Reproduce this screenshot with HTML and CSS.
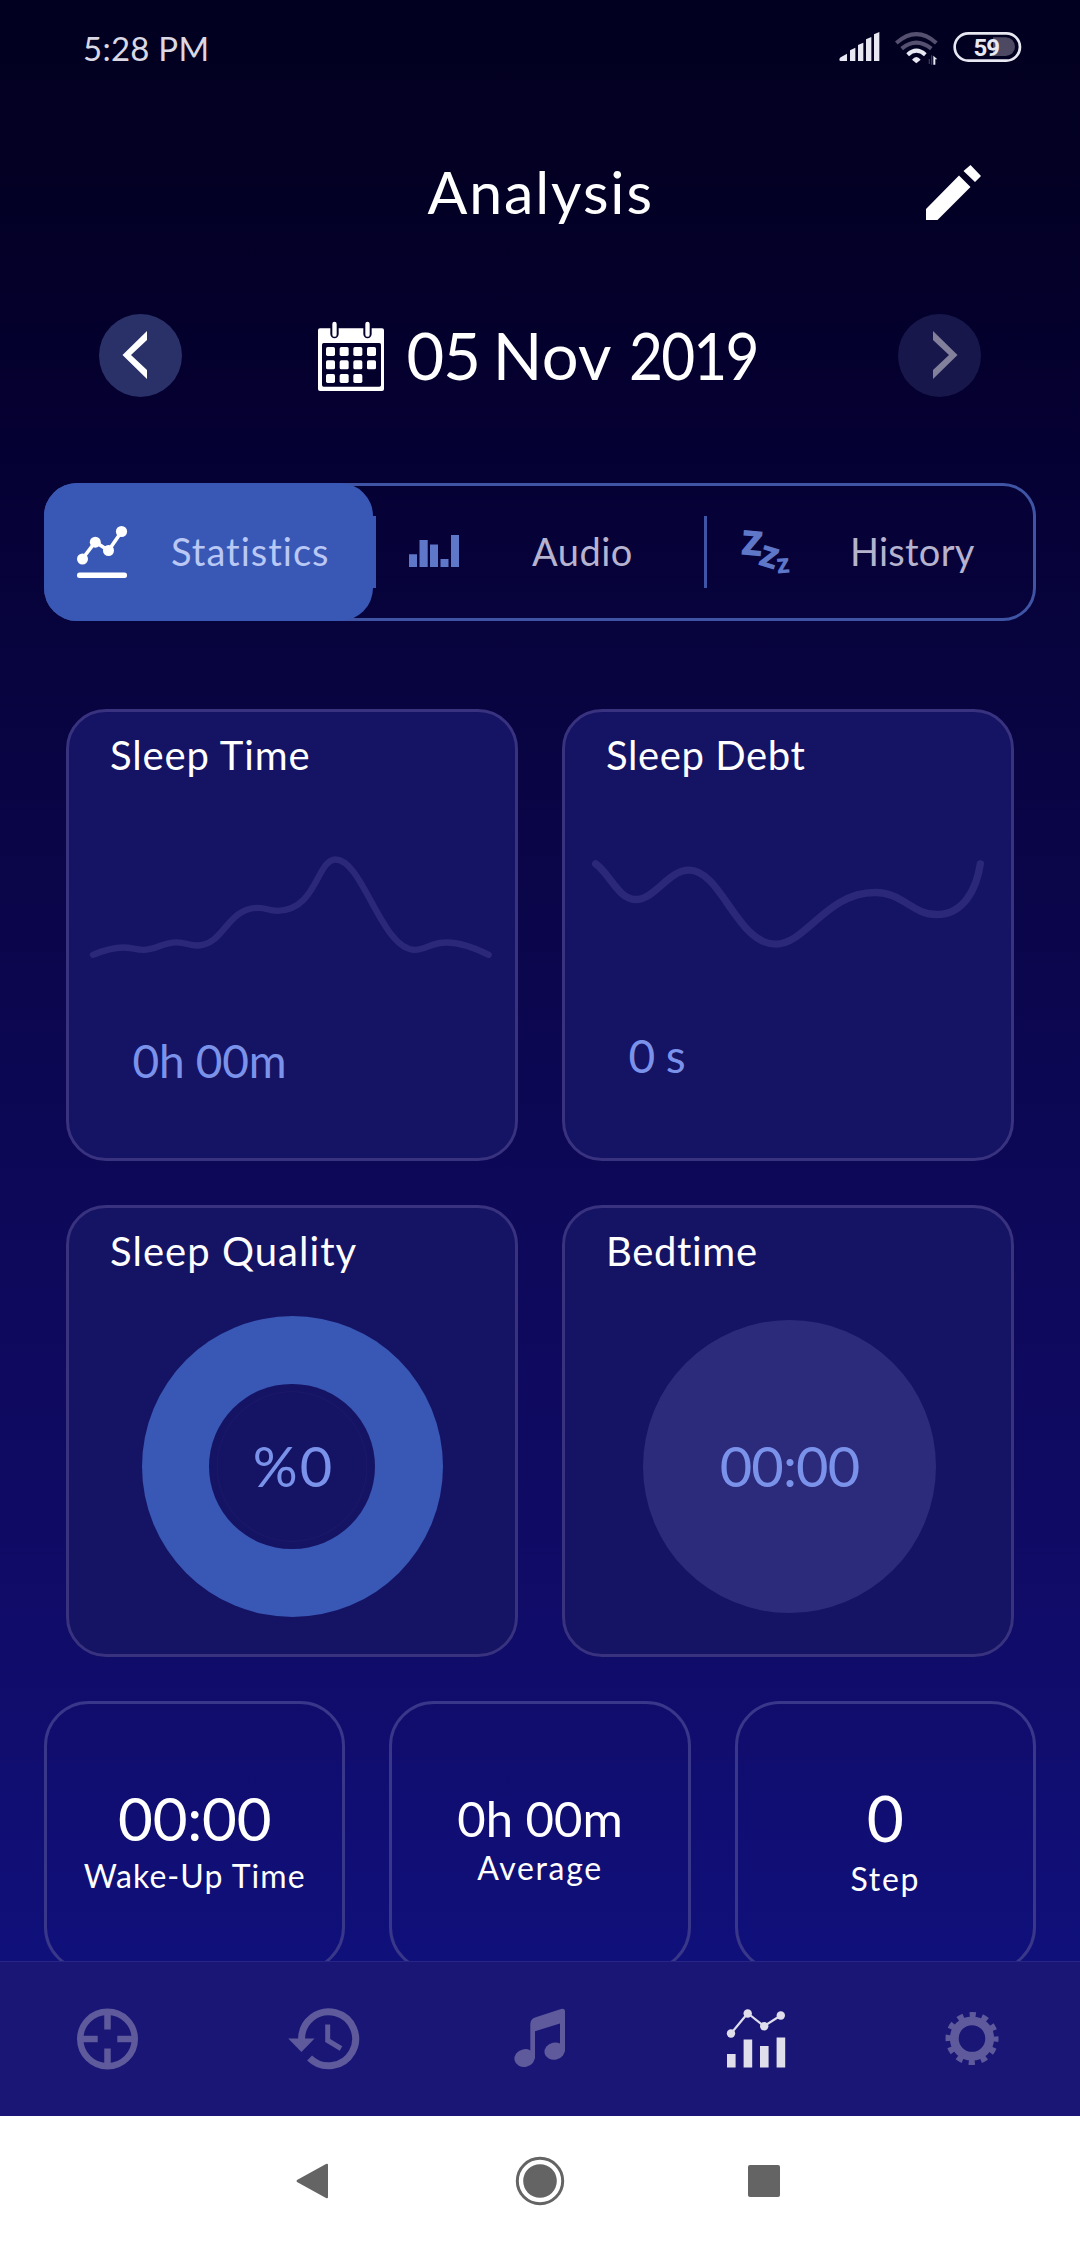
FILE: index.html
```html
<!DOCTYPE html>
<html lang="en">
<head>
<meta charset="utf-8">
<title>Analysis</title>
<link rel="stylesheet" href="styles.css">
</head>
<body>
<div class="phone">
  <div class="status">
    <span class="clock">5:28 PM</span>
    <svg class="status-icons" viewBox="110 60 560 110" width="186.67" height="36.67">
      <g fill="#e8e8f3">
        <path d="M117 149Q117 144 121 142L140 131V153H121Q117 153 117 149Z"/>
        <path d="M149 121L165 113V153H149ZM173 105L189 98V153H173ZM197 88L213 81V153H197ZM221 73L237 66V153H221Z"/>
        <path d="M335 149Q348 133 361 149L348 160Z"/>
        <path d="M399 137L411 148H405V164H399Z"/>
      </g>
      <path d="M387 147V162M394 136V164" stroke="#3c3858" stroke-width="4" fill="none"/>
      <g fill="none" stroke-width="12">
        <path d="M322 134Q348 110 375 134" stroke="#e8e8f3"/>
        <path d="M304 116Q348 80 393 116" stroke="#55506f"/>
        <path d="M288 99Q348 46 408 99" stroke="#55506f"/>
      </g>
      <path d="M578 82H616A28 28 0 0 1 616 138H578Z" fill="#4d4963"/>
      <rect x="463" y="70" width="196" height="82" rx="41" fill="none" stroke="#e8e8f3" stroke-width="8"/>
      <text class="battery" x="558" y="138" text-anchor="middle">59</text>
    </svg>
  </div>

  <header class="header">
    <h1 class="title">Analysis</h1>
    <svg class="edit" viewBox="926 164 55 55" width="55" height="55" fill="#fff">
      <path d="M970.5 164L981 175L975 181L963.5 170ZM959 174.5L970.5 186L937.5 219H926V208Z"/>
    </svg>
  </header>

  <div class="datebar">
    <span class="arrow">
      <svg viewBox="99 314 83 83" width="83" height="83"><path d="M147 331V340L131 355L147 370V379L122.500 355Z" fill="#fff"/></svg>
    </span>
    <div class="date">
      <svg viewBox="54 60 198 210" width="66" height="70">
        <path d="M60 82H246Q252 82 252 88V264Q252 270 246 270H60Q54 270 54 264V88Q54 82 60 82Z" fill="#fff"/>
        <rect x="66" y="126" width="177" height="131" rx="5" fill="#04002c"/>
        <path d="M91 60H116V99A12.500 12.500 0 0 1 91 99ZM190 60H215V99A12.500 12.500 0 0 1 190 99Z" fill="#04002c"/>
        <path d="M103.500 69V101M202.500 69V101" stroke="#fff" stroke-width="13" stroke-linecap="round"/>
        <g fill="#fff">
          <rect x="78" y="138" width="27" height="27" rx="5"/><rect x="119" y="138" width="27" height="27" rx="5"/><rect x="160" y="138" width="27" height="27" rx="5"/><rect x="201" y="138" width="27" height="27" rx="5"/>
          <rect x="78" y="178" width="27" height="27" rx="5"/><rect x="119" y="178" width="27" height="27" rx="5"/><rect x="160" y="178" width="27" height="27" rx="5"/><rect x="201" y="178" width="27" height="27" rx="5"/>
          <rect x="78" y="219" width="27" height="27" rx="5"/><rect x="119" y="219" width="27" height="27" rx="5"/><rect x="160" y="219" width="27" height="27" rx="5"/>
        </g>
      </svg>
      <span class="date-text"><span class="day">05</span> Nov <span class="year">2019</span></span>
    </div>
    <span class="arrow arrow-next">
      <svg viewBox="898 314 83 83" width="83" height="83"><path d="M933 331V340L949 355L933 370V379L957.500 355Z" fill="#83809c"/></svg>
    </span>
  </div>

  <nav class="tabs">
    <div class="tab tab-active">
      <svg viewBox="76 525 52 54" width="52" height="54" fill="#fff">
        <path d="M82.300 559L95.300 542L108.500 550.500L121.700 531.500" fill="none" stroke="#fff" stroke-width="3.600"/>
        <circle cx="82.500" cy="559" r="5.500"/><circle cx="95.300" cy="542.200" r="5.500"/><circle cx="108.500" cy="550.500" r="5.500"/><circle cx="121.500" cy="531.500" r="5.600"/>
        <rect x="77" y="572.500" width="50" height="5.500" rx="2.500"/>
      </svg>
      <span>Statistics</span>
    </div>
    <i class="divider divider-active"></i>
    <div class="tab tab-audio">
      <svg viewBox="409 525 50 54" width="50" height="54" fill="#5f77c9">
        <path d="M409 554.300H417V567H409ZM419.500 540H427.700V567H419.500ZM430 544.500H438V567H430ZM440.500 559H448.500V567H440.500ZM451 535H459V567H451Z"/>
      </svg>
      <span>Audio</span>
    </div>
    <i class="divider"></i>
    <div class="tab tab-history">
      <svg class="zzz" viewBox="740 525 51 54" width="51" height="54">
        <text transform="translate(740.500 554.500) rotate(5)" font-size="34.500">Z</text>
        <text transform="translate(757.500 564.500) rotate(17)" font-size="29">Z</text>
        <text transform="translate(777.500 573.500) rotate(-5)" font-size="20.500">Z</text>
      </svg>
      <span>History</span>
    </div>
  </nav>

  <main class="content">
    <section class="cards">
      <article class="card">
        <h2 class="card-title t-time">Sleep Time</h2>
        <svg class="wave" viewBox="57 265.500 1338 675" width="446" height="225">
          <path stroke-width="19" d="M129 793C160 780 192 771 220 771C245 771 256 778 280 778C318 778 338 755.500 380 755.500C408 755.500 416 765 442 765C522 765 530 652 625 652C650 652 655 661 682 661C800 661 800 507 857 507C938 507 995 778 1094 778C1130 778 1140 756 1190 756C1232 756 1270 770 1316 793"/>
        </svg>
        <p class="value">0h 00m</p>
      </article>
      <article class="card">
        <h2 class="card-title t-debt">Sleep Debt</h2>
        <svg class="wave" viewBox="75 265.500 1338 675" width="446" height="225">
          <path stroke-width="22" d="M167 520C207 546 235 627 287 627C345 627 385 539 447 539C545 539 590 761 708 761C797 761 860 606 1005 606C1090 606 1115 672 1190 672C1268 672 1309 600 1321 520"/>
        </svg>
        <p class="value value-debt">0 s</p>
      </article>
      <article class="card">
        <h2 class="card-title t-quality">Sleep Quality</h2>
        <div class="donut"><div class="donut-hole">%0</div></div>
      </article>
      <article class="card">
        <h2 class="card-title t-bed">Bedtime</h2>
        <div class="disc">00:00</div>
      </article>
    </section>

    <section class="minis">
      <article class="mini"><p class="num num-wake">00:00</p><p class="label label-wake">Wake-Up Time</p></article>
      <article class="mini"><p class="num num-avg">0h 00m</p><p class="label label-avg">Average</p></article>
      <article class="mini"><p class="num num-step">0</p><p class="label label-step">Step</p></article>
    </section>
  </main>

  <nav class="bottom">
    <svg viewBox="68 1999.500 80 80" width="80" height="80" fill="none" stroke="#5f5a9c">
      <circle cx="107.500" cy="2039.500" r="27.300" stroke-width="6.400"/>
      <path d="M107.500 2012V2030M107.500 2049V2067M80 2039.500H97.700M117.300 2039.500H135" stroke-width="6.500"/>
    </svg>
    <svg viewBox="284 1999.500 80 80" width="80" height="80" fill="none" stroke="#5f5a9c">
      <path d="M301.600 2039.500A27 27 0 1 1 309.600 2058.500" stroke-width="7"/>
      <path d="M288.200 2039H314.600L301.400 2052.500Z" fill="#5f5a9c" stroke="none"/>
      <path d="M327.700 2025V2041L341 2049" stroke-width="5"/>
    </svg>
    <svg viewBox="500 1999.500 80 80" width="80" height="80" fill="#5f5a9c">
      <path d="M530.300 2025Q530.300 2019.500 535 2018L561 2009.500Q565 2008.500 565 2012V2052H560V2024L535 2031.800V2059H530.300Z"/>
      <ellipse cx="524.600" cy="2058.600" rx="10.300" ry="8.900" transform="rotate(-12 524.600 2058.600)"/>
      <ellipse cx="554.600" cy="2051.600" rx="10.300" ry="8.600" transform="rotate(-12 554.600 2051.600)"/>
    </svg>
    <svg viewBox="716 1999.500 80 80" width="80" height="80" fill="#dfdeea">
      <path d="M731 2034L747.700 2013.700L764 2026.700L780.700 2016" fill="none" stroke="#dfdeea" stroke-width="2.200"/>
      <circle cx="731" cy="2034" r="4.200"/><circle cx="747.700" cy="2014" r="4.200"/><circle cx="764.200" cy="2026.700" r="4.200"/><circle cx="780.800" cy="2016" r="4.200"/>
      <path d="M727 2054.500H735.600V2068H727ZM743.600 2040H752.200V2068H743.600ZM760 2046.500H768.600V2068H760ZM776.600 2038H785.200V2068H776.600Z"/>
    </svg>
    <svg viewBox="932 1999.500 80 80" width="80" height="80" fill="none" stroke="#5f5a9c">
      <circle cx="972" cy="2039" r="17.700" stroke-width="8.800"/>
      <circle cx="972" cy="2039" r="23.800" stroke-width="5.400" stroke-dasharray="6.300 6.161" stroke-dashoffset="3.150"/>
    </svg>
  </nav>

  <div class="system">
    <svg viewBox="282 2151 60 60" width="60" height="60" fill="#646464"><path d="M297 2180Q296 2181 297 2182L326 2198Q328 2199 328 2197V2165Q328 2163 326 2164Z"/></svg>
    <svg viewBox="510 2151 60 60" width="60" height="60" fill="#646464"><circle cx="540" cy="2181" r="16.800"/><circle cx="540" cy="2181" r="22.700" fill="none" stroke="#646464" stroke-width="3"/></svg>
    <svg viewBox="734 2151 60 60" width="60" height="60" fill="#646464"><rect x="748" y="2165" width="32" height="32" rx="2"/></svg>
  </div>
</div>
</body>
</html>
```
FILE: styles.css
```css
* { box-sizing: border-box; margin: 0; padding: 0; }
body { font-family: Lato, "Liberation Sans", sans-serif; font-weight: 400; color: #fff; }
svg { display: block; flex: none; }

.phone {
  display: flex;
  flex-direction: column;
  width: 1080px;
  height: 2246px;
  overflow: hidden;
  background: linear-gradient(#020020 0, #030024 170px, #050032 440px, #080440 690px, #0d0857 1180px, #100c6a 1660px, #10107b 1961px);
}

.status { display: flex; justify-content: space-between; padding: 28px 56.700px 0 83px; height: 149px; }
.clock { font-size: 33px; line-height: 40px; letter-spacing: 0.250px; color: #d9d8e4; }
.status-icons { margin-top: 2px; }
.battery { font: 700 72px Roboto, sans-serif; letter-spacing: -3px; fill: #e8e8f3; }

.header { display: grid; grid-template-columns: 1fr 225px 1fr; align-items: center; height: 86px; }
.title { grid-column: 2; font-size: 59px; font-weight: 400; line-height: 86px; letter-spacing: 1.900px; white-space: nowrap; }
.edit { justify-self: end; margin-right: 99px; }

.datebar { display: flex; align-items: center; justify-content: space-between; margin-top: 79px; padding: 0 99px; height: 83px; }
.arrow { width: 83px; height: 83px; border-radius: 50%; background: #2a3068; }
.arrow-next { background: #17174b; }
.date { display: flex; flex: 1; align-items: center; gap: 22.500px; padding-left: 136px; }
.date-text { font-size: 65px; line-height: 80px; margin-bottom: 1px; white-space: pre; word-spacing: -4px; letter-spacing: 0.300px; }
.day { letter-spacing: -1px; }
.year { display: inline-block; letter-spacing: -2px; transform: scaleX(0.9); transform-origin: 0 50%; margin-left: 6px; margin-right: -30px; }

.tabs { display: grid; grid-template-columns: 329px 3px 328px 3px 329px; align-items: center; margin: 86px 44px 0; height: 138px; border-radius: 33px; box-shadow: inset 0 0 0 3px #3f54a4; }
.tab { display: flex; align-items: center; height: 138px; padding-left: 32px; gap: 43px; font-size: 38px; color: #b6b3cf; }
.tab span { line-height: 46px; margin-bottom: 2px; }
.tab-active { background: #3957b4; border-radius: 33px; color: #b9c8f5; letter-spacing: 1px; }
.tab-audio { padding-left: 33px; gap: 73px; letter-spacing: 0.500px; }
.tab-history { padding-left: 33px; gap: 59px; letter-spacing: 0.250px; }
.divider { height: 72px; background: #3f54a4; }
.divider-active { background: #3957b4; }
.zzz { fill: #5f77c9; font-family: "Open Sans", sans-serif; font-weight: 800; overflow: visible; letter-spacing: 0; }

.content { flex: 1; min-height: 0; overflow: hidden; padding: 88px 44px 0; }
.cards { display: grid; grid-template-columns: 452px 452px; grid-auto-rows: 452px; gap: 44px; padding-left: 22px; }
.card { border: 3px solid #38327f; border-radius: 40px; background: #151364; padding-top: 19px; }
.card-title { padding-left: 41px; font-size: 40px; font-weight: 400; line-height: 48px; }
.t-time { letter-spacing: 0.880px; }
.t-debt { letter-spacing: 0.600px; }
.t-quality { letter-spacing: 1.050px; }
.t-bed { letter-spacing: 0.660px; }
.wave { fill: none; stroke: #2b287a; stroke-linecap: round; }
.value { margin-top: 28.500px; padding-left: 63.500px; font-size: 46px; line-height: 56px; letter-spacing: -0.250px; color: #7b92ea; }
.value-debt { margin-top: 23.500px; letter-spacing: -0.600px; }

.donut { display: grid; place-items: center; width: 301px; height: 301px; margin: 41px auto 0; border-radius: 50%; background: #3957b4; }
.donut-hole { display: grid; place-items: center; width: 165.500px; height: 165.500px; padding: 0 0 1px 3px; border-radius: 50%; background: radial-gradient(circle, #151364 74px, #1b1768 74.500px, #1b1768 75px, #151364 75.500px); font-size: 56px; line-height: 68px; letter-spacing: 2px; color: #7b92ea; }
.disc { display: grid; place-items: center; width: 293px; height: 293px; margin: 45px 0 0 78px; padding-bottom: 1px; border-radius: 50%; background: #2c2a7b; font-size: 56px; line-height: 68px; letter-spacing: -0.860px; color: #7b92ea; }

.minis { display: grid; grid-template-columns: repeat(3, 1fr); gap: 44px; margin-top: 44px; }
.mini { height: 271px; padding-top: 83.800px; border: 3px solid #38378a; border-radius: 45px; text-align: center; }
.num { line-height: 60px; }
.num-wake { font-size: 60px; letter-spacing: -0.200px; }
.num-avg { font-size: 49px; letter-spacing: 0; }
.num-step { font-size: 64px; }
.label { font-size: 32px; line-height: 40px; }
.label-wake { margin-top: 7.800px; letter-spacing: 1.060px; }
.label-avg { margin-top: 0.600px; letter-spacing: 1.660px; }
.label-step { margin-top: 11px; letter-spacing: 1.660px; }

.bottom { display: grid; grid-template-columns: repeat(5, 1fr); place-items: center; flex: none; height: 155px; border-top: 1px solid #2a2585; background: #191676; }
.system { display: flex; flex: none; align-items: center; height: 130px; padding-left: 282px; gap: 168px; background: #fff; }
.system svg:last-child { margin-left: -4px; }
```
